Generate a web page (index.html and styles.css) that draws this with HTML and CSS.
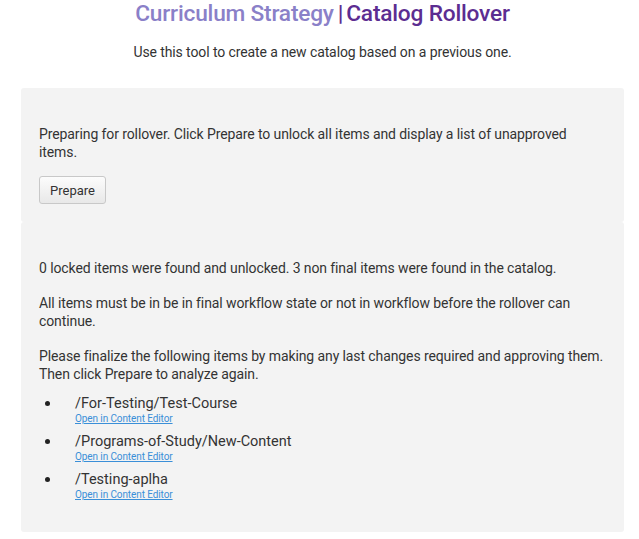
FILE: index.html
```html
<!DOCTYPE html>
<html lang="en">
<head>
    <meta charset="UTF-8">
    <title>Catalog Rollover</title>
    <link rel="stylesheet" href="styles.css">
</head>
<body>
    <div class="page">
        <header class="page-header">
            <h1><span class="brand">Curriculum Strategy</span><span class="sep">|</span>Catalog Rollover</h1>
            <p class="intro">Use this tool to create a new catalog based on a previous one.</p>
        </header>

        <section class="panel panel-prepare">
            <p>Preparing for rollover. Click Prepare to unlock all items and display a list of unapproved items.</p>
            <button class="btn">Prepare</button>
        </section>

        <section class="panel panel-results">
            <p>0 locked items were found and unlocked. 3 non final items were found in the catalog.</p>
            <p>All items must be in be in final workflow state or not in workflow before the rollover can continue.</p>
            <p>Please finalize the following items by making any last changes required and approving them. Then click Prepare to analyze again.</p>
            <ul class="item-list">
                <li>/For-Testing/Test-Course<a href="#">Open in Content Editor</a></li>
                <li>/Programs-of-Study/New-Content<a href="#">Open in Content Editor</a></li>
                <li>/Testing-aplha<a href="#">Open in Content Editor</a></li>
            </ul>
        </section>
    </div>
</body>
</html>
```

FILE: styles.css
```css
* {
    margin: 0;
    padding: 0;
    box-sizing: border-box;
}
body {
    font-family: Roboto, 'Liberation Sans', sans-serif;
    font-size: 14px;
    line-height: 18px;
    letter-spacing: -0.1px;
    color: #333;
    background-color: #fff;
}
.page {
    padding: 0 15px 0 21px;
}
.page-header {
    text-align: center;
    height: 88px;
}
.page-header h1 {
    font-size: 22.7px;
    font-weight: 500;
    line-height: 27px;
    letter-spacing: -0.2px;
    color: #5c2d91;
}
.page-header .brand {
    color: #8a80c8;
}
.page-header .sep {
    margin: 0 3px 0 4px;
}
.intro {
    margin-top: 16px;
}
.panel {
    background-color: #f3f3f3;
    border-radius: 3px;
    padding: 37px 18px 0;
}
.panel-prepare {
    height: 134px;
}
.panel-results {
    height: 310px;
}
.panel p {
    margin-bottom: 17px;
}
.panel-prepare p {
    margin-bottom: 15px;
}
.panel-results p:last-of-type {
    margin-bottom: 13px;
}
.btn {
    display: block;
    height: 28px;
    padding: 0 10px;
    font-family: inherit;
    font-size: 13px;
    color: #333;
    background: linear-gradient(#fcfcfc, #e8e8e8);
    border: 1px solid #c8c8c8;
    border-radius: 3px;
}
.item-list {
    list-style: none;
    padding-left: 36px;
}
.item-list li {
    position: relative;
    margin-bottom: 9px;
    font-size: 14.5px;
    line-height: 16px;
    letter-spacing: 0;
}
.item-list li:before {
    content: "";
    position: absolute;
    left: -30px;
    top: 5px;
    width: 5px;
    height: 5px;
    border-radius: 50%;
    background-color: #222;
}
.item-list a {
    display: block;
    padding-top: 1px;
    font-size: 10px;
    line-height: 12px;
    letter-spacing: -0.1px;
    color: #3a8fd8;
}
```
